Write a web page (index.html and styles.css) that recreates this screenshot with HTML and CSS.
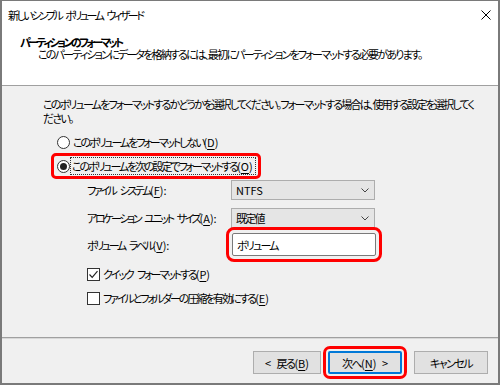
FILE: index.html
```html
<!DOCTYPE html>
<html lang="ja">
<head>
  <meta charset="UTF-8" />
  <title>新しいシンプル ボリューム ウィザード</title>
  <link rel="stylesheet" href="styles.css">
</head>
<body>

  <div class="window">
    <div class="titlebar">
      <span class="title">新しいシンプル ボリューム ウィザード</span>
      <svg class="close" width="10" height="10" viewBox="0 0 10 10">
        <path d="M0.5 0.5 L9.5 9.5 M9.5 0.5 L0.5 9.5" stroke="#000" stroke-width="1" fill="none" />
      </svg>
    </div>

    <div class="header">
      <div class="h-title">パーティションのフォーマット</div>
      <div class="h-sub">このパーティションにデータを格納するには、最初にパーティションをフォーマットする必要があります。</div>
    </div>

    <div class="content">
      <p class="intro">このボリュームをフォーマットするかどうかを選択してください。フォーマットする場合は、使用する設定を選択してく<br>ださい。</p>

      <div class="radio-row first">
        <span class="radio"></span>
        <span class="opt">このボリュームをフォーマットしない<span class="key">(<u>D</u>)</span></span>
      </div>

      <div class="radio-row second mark">
        <span class="radio checked"></span>
        <span class="opt focus">このボリュームを次の設定でフォーマットする<span class="key">(<u>O</u>)</span></span>
      </div>

      <div class="settings">
        <div class="field row-fs">
          <span class="label">ファイル システム<span class="key">(<u>F</u>):</span></span>
          <div class="combo">
            <span class="key">NTFS</span>
            <svg width="8" height="5" viewBox="0 0 8 5"><path d="M0.5 0.5 L4 4 L7.5 0.5" stroke="#444" fill="none" /></svg>
          </div>
        </div>
        <div class="field row-au">
          <span class="label">アロケーション ユニット サイズ<span class="key">(<u>A</u>):</span></span>
          <div class="combo">
            <span>既定値</span>
            <svg width="8" height="5" viewBox="0 0 8 5"><path d="M0.5 0.5 L4 4 L7.5 0.5" stroke="#444" fill="none" /></svg>
          </div>
        </div>
        <div class="field row-vl">
          <span class="label">ボリューム ラベル<span class="key">(<u>V</u>):</span></span>
          <div class="textbox mark">ボリューム</div>
        </div>

        <div class="check-row quick">
          <span class="check checked">
            <svg width="11" height="11" viewBox="0 0 11 11"><path d="M1.5 5.5 L4.2 8.3 L9.5 2.2" stroke="#222" stroke-width="1.2" fill="none" /></svg>
          </span>
          <span class="opt">クイック フォーマットする<span class="key">(<u>P</u>)</span></span>
        </div>
        <div class="check-row compress">
          <span class="check"></span>
          <span class="opt">ファイルとフォルダーの圧縮を有効にする<span class="key">(<u>E</u>)</span></span>
        </div>
      </div>
    </div>

    <div class="footer">
      <button class="btn back"><span class="key">&lt; </span>戻る<span class="key">(<u>B</u>)</span></button>
      <button class="btn next mark">次へ<span class="key">(<u>N</u>) &gt;</span></button>
      <button class="btn cancel">キャンセル</button>
    </div>
  </div>

</body>
</html>
```

FILE: styles.css
```css
:root {
  --face: #f0f0f0;
  --btn-face: #e1e1e1;
  --btn-border: #adadad;
  --frame: #7a7a7a;
  --accent: #0078d7;
  --mark: #ff0000;
}
* {
  box-sizing: border-box;
}
body {
  margin: 0;
  width: 500px;
  height: 385px;
  font-family: "Noto Sans CJK JP", "Noto Sans", sans-serif;
  font-size: 11px;
  font-feature-settings: "palt";
  letter-spacing: -1.8px;
  word-spacing: 1px;
  white-space: nowrap;
  color: #000;
  overflow: hidden;
}
u {
  text-decoration-thickness: 1px;
  text-underline-offset: 2px;
}
.key {
  letter-spacing: 0;
  word-spacing: 0;
}
.opt {
  letter-spacing: -2.1px;
  word-spacing: 4px;
}
.window {
  width: 500px;
  height: 385px;
  border: 2px solid var(--frame);
  border-top-width: 1px;
  background-color: var(--face);
  display: flex;
  flex-direction: column;
}
.titlebar {
  height: 27px;
  background-color: #fff;
  display: flex;
  align-items: center;
  justify-content: space-between;
  padding: 0 7px 0 6px;
}
.title {
  line-height: 14px;
  letter-spacing: -2.5px;
  word-spacing: 4px;
}
.header {
  height: 58px;
  background-color: #fff;
  border-bottom: 1px solid #a0a0a0;
  padding: 8px 0 0 18px;
  line-height: 12px;
}
.h-title {
  font-weight: 700;
  letter-spacing: -2.6px;
}
.h-sub {
  padding-left: 18px;
}
.content {
  padding: 11px 0 0 41px;
}
.intro {
  margin: 0;
  line-height: 14px;
}
.radio-row {
  display: flex;
  align-items: center;
  line-height: 14px;
}
.radio-row.first {
  margin: 9px 0 0 14px;
  height: 16px;
  gap: 3px;
}
.radio-row.second {
  margin: 6px 0 0 11px;
  height: 20px;
  width: fit-content;
  padding: 0 3px 0 3px;
  gap: 1px;
}
.radio {
  width: 13px;
  height: 13px;
  border: 1px solid #333;
  border-radius: 50%;
  background-color: #fff;
  display: flex;
  align-items: center;
  justify-content: center;
  flex-shrink: 0;
}
.radio.checked::after {
  content: "";
  width: 7px;
  height: 7px;
  border-radius: 50%;
  background-color: #222;
}
.focus {
  outline: 1px dotted #333;
  outline-offset: 0;
  padding: 1px 2px 1px 1px;
}
.mark {
  outline: 3px solid var(--mark);
  border-radius: 2px;
}
.settings {
  margin-left: 44px;
}
.field {
  display: flex;
  align-items: center;
}
.label {
  width: 144px;
  line-height: 14px;
  letter-spacing: -2.4px;
  word-spacing: 4px;
}
.row-fs {
  margin-top: 4px;
  height: 20px;
}
.row-au {
  margin-top: 8px;
  height: 20px;
}
.row-vl {
  margin-top: 5px;
  height: 23px;
}
.combo {
  width: 144px;
  height: 20px;
  background-color: #e5e5e5;
  border: 1px solid var(--btn-border);
  display: flex;
  align-items: center;
  justify-content: space-between;
  padding: 0 5px 0 4px;
}
.textbox {
  width: 144px;
  height: 23px;
  margin-left: 1px;
  background-color: #fff;
  border: 1px solid var(--frame);
  display: flex;
  align-items: center;
  padding-left: 4px;
  outline-offset: 3px;
}
.check-row {
  display: flex;
  align-items: center;
  gap: 3px;
  height: 16px;
  line-height: 14px;
}
.check-row.quick {
  margin-top: 10px;
}
.check-row.compress {
  margin-top: 8px;
}
.check {
  width: 13px;
  height: 13px;
  border: 1px solid #333;
  background-color: #fff;
  display: flex;
  align-items: center;
  justify-content: center;
  flex-shrink: 0;
}
.footer {
  margin-top: auto;
  height: 46px;
  border-top: 1px solid #a0a0a0;
  box-shadow: inset 0 1px 0 #d8d8d8;
  display: flex;
  justify-content: flex-end;
  align-items: flex-start;
  padding: 13px 10px 0 0;
}
.btn {
  height: 23px;
  background-color: var(--btn-face);
  border: 1px solid var(--btn-border);
  font: inherit;
  letter-spacing: -1.5px;
  word-spacing: 2px;
  color: #000;
  padding: 0;
}
.btn .key {
  word-spacing: 3px;
}
.btn.back {
  width: 68px;
}
.btn.next {
  width: 74px;
  margin-left: 7px;
  border: 2px solid var(--accent);
  outline-offset: 2px;
}
.btn.cancel {
  width: 74px;
  margin-left: 12px;
}
```
